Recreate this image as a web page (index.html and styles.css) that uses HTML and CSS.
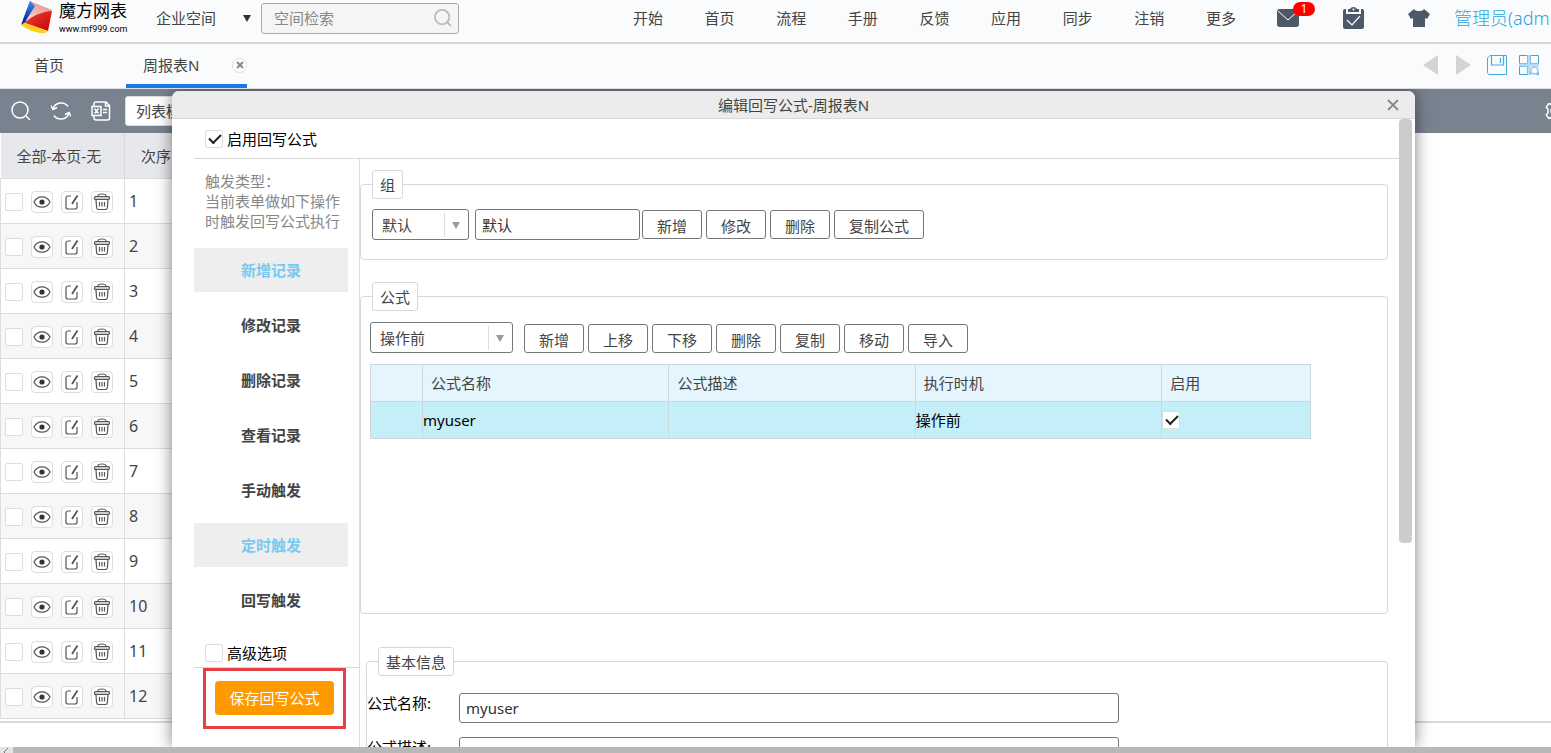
FILE: index.html
```html
<!DOCTYPE html>
<html lang="zh-CN">

<head>
    <meta charset="UTF-8">
    <meta name="viewport" content="width=device-width, initial-scale=1.0">
    <title>魔方网表</title>
    <link rel="stylesheet" href="styles.css">
</head>

<body>

    <svg class="sprite" aria-hidden="true">
        <symbol id="icon-search" viewBox="0 0 20 20">
            <circle cx="9" cy="9" r="8" />
            <path d="M15 15l4 4" />
        </symbol>
        <symbol id="icon-eye" viewBox="0 0 18 18">
            <path d="M1 9c1.600-3.300 4.600-5.200 8-5.200s6.400 1.900 8 5.200c-1.600 3.300-4.600 5.200-8 5.200s-6.400-1.900-8-5.200z" />
            <circle cx="9" cy="9" r="2.600" fill="#333" stroke="none" />
        </symbol>
        <symbol id="icon-edit" viewBox="0 0 18 18">
            <path d="M8 3H5a2 2 0 0 0-2 2v9a2 2 0 0 0 2 2h7a2 2 0 0 0 2-2V9" />
            <path d="M14.500 2.500L9 11" stroke-width="1.800" />
        </symbol>
        <symbol id="icon-trash" viewBox="0 0 18 18">
            <path d="M5 3q0-2 4-2t4 2" />
            <path d="M2.500 3.500h13q1 0 1 1.500t-1 1.500h-13q-1 0-1-1.500t1-1.500z" fill="#ccc" />
            <path d="M3 7l.6 7.500q.2 2 2 2h6.800q1.800 0 2-2L15 7" />
            <path d="M6.500 9v4.500M9 9v4.500M11.500 9v4.500" />
        </symbol>
    </svg>

    <header class="topbar">
        <a class="logo" href="#">
            <svg width="32" height="34" viewBox="0 0 32 34">
                <defs>
                    <linearGradient id="blue" x1="0" y1="0" x2="0" y2="1">
                        <stop offset="0" stop-color="#3f8fe8" />
                        <stop offset="1" stop-color="#0b1e96" />
                    </linearGradient>
                    <linearGradient id="pink" x1="1" y1="0" x2="0" y2="1">
                        <stop offset="0" stop-color="#e2867f" />
                        <stop offset="1" stop-color="#fbdcd8" />
                    </linearGradient>
                    <linearGradient id="red" x1="0" y1="0" x2="1" y2="1">
                        <stop offset="0" stop-color="#e8463a" />
                        <stop offset="1" stop-color="#c80000" />
                    </linearGradient>
                </defs>
                <path d="M9 1L0 25l5-3L13 7z" fill="url(#blue)" />
                <path d="M9 1l22 9-2 2C20 12 11 15 4 22z" fill="url(#pink)" />
                <path d="M9 1L2 20l2 2L14 6z" fill="url(#blue)" />
                <path d="M31 11l-4 20L4 23c6-7 15-11 27-12z" fill="url(#red)" />
                <path d="M0 25l4-2 23 8q-3 3-8 2Q8 31 0 25z" fill="#ffcf1c" />
            </svg>
            <span class="logo-text">
                <strong>魔方网表</strong>
                <small>www.mf999.com</small>
            </span>
        </a>
        <button class="space" type="button"><span>企业空间</span><i class="caret"></i></button>
        <div class="search">
            <input type="text" placeholder="空间检索" aria-label="空间检索">
            <svg class="search-icon" width="18" height="18">
                <use href="#icon-search" />
            </svg>
        </div>
        <nav class="menu">
            <a href="#">开始</a>
            <a href="#">首页</a>
            <a href="#">流程</a>
            <a href="#">手册</a>
            <a href="#">反馈</a>
            <a href="#">应用</a>
            <a href="#">同步</a>
            <a href="#">注销</a>
            <a href="#">更多</a>
        </nav>
        <div class="tools">
            <button class="plain mail" type="button" aria-label="消息">
                <svg width="22" height="18" viewBox="0 0 22 18">
                    <rect width="22" height="18" rx="3" fill="#4d5868" />
                    <path d="M1 2l10 9 10-9" fill="none" stroke="#fff" />
                </svg>
                <span class="badge">1</span>
            </button>
            <button class="plain" type="button" aria-label="任务">
                <svg width="21" height="22" viewBox="0 0 21 22">
                    <path d="M0 4q0-2 2-2h1v5h15V2h1q2 0 2 2v16q0 2-2 2H2q-2 0-2-2z" fill="#4d5868" />
                    <path d="M5 5V2h2q1-2 3.500-2T14 2h2v3z" fill="#4d5868" />
                    <circle cx="10.500" cy="2.500" r="1" fill="#fff" />
                    <path d="M4 13l5 5 8-9" fill="none" stroke="#fff" stroke-width="1.200" />
                </svg>
            </button>
            <button class="plain" type="button" aria-label="皮肤">
                <svg width="22" height="18" viewBox="0 0 22 18">
                    <path d="M6 0q1 2 5 2t5-2l6 5-3 5-2-1v9H5V9l-2 1-3-5z" fill="#4d5868" />
                </svg>
            </button>
        </div>
        <a class="user" href="#">管理员(adm</a>
    </header>

    <div class="tabs">
        <a class="tab" href="#">首页</a>
        <div class="tab active">
            <a href="#">周报表N</a>
            <button class="tab-close" type="button" aria-label="关闭标签">
                <svg width="8" height="8" viewBox="0 0 8 8">
                    <path d="M1 1l6 6M7 1L1 7" stroke="#888" stroke-width="2" />
                </svg>
            </button>
        </div>
        <div class="tab-tools">
            <button class="plain" type="button" aria-label="向左">
                <svg width="16" height="20" viewBox="0 0 16 20">
                    <path d="M15 0v20L0 10z" fill="#d4d4d4" />
                </svg>
            </button>
            <button class="plain" type="button" aria-label="向右">
                <svg width="16" height="20" viewBox="0 0 16 20">
                    <path d="M1 0v20l15-10z" fill="#d4d4d4" />
                </svg>
            </button>
            <button class="plain" type="button" aria-label="保存">
                <svg width="20" height="20" viewBox="0 0 20 20" fill="none" stroke="#3fb0e0">
                    <path d="M3 .5h16.500v19H2.500q-2 0-2-2V3z" />
                    <path d="M4.500 1v9h12V1M13.500 3v5" stroke-width="1.200" />
                </svg>
            </button>
            <button class="plain" type="button" aria-label="布局">
                <svg width="20" height="20" viewBox="0 0 20 20" fill="none" stroke="#3fa4dc">
                    <path d="M10 0v20M0 10h20" stroke="#b5dcf5" stroke-width="3" />
                    <path d="M8.500.5h-8v8M11.500.5h8v8M.5 11.500v8h8" />
                    <path d="M8.500.5v8h-8M11.500.5v8h8M.5 11.500h8v8" stroke="#7cc3ea" />
                    <circle cx="15.500" cy="15.500" r="3.500" stroke="#8cc8ee" stroke-width="1.500" fill="#fff" />
                    <path d="M11.500 19.500v-2M19.500 17.500v2h-2" />
                </svg>
            </button>
        </div>
    </div>

    <main class="main">
        <div class="toolbar">
            <button class="plain" type="button" aria-label="查询">
                <svg width="20" height="20">
                    <use href="#icon-search" />
                </svg>
            </button>
            <button class="plain" type="button" aria-label="刷新">
                <svg width="20" height="20" viewBox="0 0 20 20">
                    <path d="M2 8a8.500 8.500 0 0 1 15-2.500M18 12a8.500 8.500 0 0 1-15 2.500" />
                    <path d="M0 4.500L2 8.500l4-2M20 15.500l-2-4-4 2" />
                </svg>
            </button>
            <button class="plain" type="button" aria-label="导出">
                <svg width="20" height="20" viewBox="0 0 20 20">
                    <path d="M3 5V3q0-2 2-2h10l3.500 3.500V17q0 2-2 2H5q-2 0-2-2v-2M14.500 1v4h4" />
                    <path d="M1 5.500h9v9H1zM3.500 7.500l4 5M7.500 7.500l-4 5M12 8.500h4M12 11.500h4" />
                </svg>
            </button>
            <button class="template" type="button">列表模板</button>
            <button class="plain gear" type="button" aria-label="设置">
                <svg width="20" height="20" viewBox="0 0 20 20">
                    <path d="M8 1h4l.7 2.500 2.600-.8 2.400 3.500-1.700 2v3.600l1.700 2-2.400 3.500-2.600-.8L12 19H8l-.7-2.500-2.600.8-2.400-3.500 1.700-2V8.200l-1.700-2 2.400-3.500 2.600.8z" />
                    <circle cx="10" cy="10" r="3" />
                </svg>
            </button>
        </div>

        <div class="list">
            <table class="records">
                <thead>
                    <tr>
                        <th class="col-actions">全部-本页-无</th>
                        <th>次序</th>
                    </tr>
                </thead>
                <tbody id="records"></tbody>
            </table>
        </div>

        <section class="dialog" role="dialog" aria-labelledby="dialog-title">
            <div class="dialog-head">
                <h1 id="dialog-title">编辑回写公式-周报表N</h1>
                <button class="plain dialog-close" type="button" aria-label="关闭">
                    <svg width="12" height="12" viewBox="0 0 12 12">
                        <path d="M1 1l10 10M11 1L1 11" stroke="#888" stroke-width="1.800" />
                    </svg>
                </button>
            </div>

            <div class="dialog-body">
                <div class="enable">
                    <label class="check"><input type="checkbox" checked>启用回写公式</label>
                </div>

                <div class="columns">
                    <aside class="side">
                        <p class="hint">触发类型：<br>当前表单做如下操作<br>时触发回写公式执行</p>
                        <div class="triggers">
                            <button class="trigger on" type="button">新增记录</button>
                            <button class="trigger" type="button">修改记录</button>
                            <button class="trigger" type="button">删除记录</button>
                            <button class="trigger" type="button">查看记录</button>
                            <button class="trigger" type="button">手动触发</button>
                            <button class="trigger on" type="button">定时触发</button>
                            <button class="trigger" type="button">回写触发</button>
                        </div>
                        <div class="advanced">
                            <label class="check"><input type="checkbox">高级选项</label>
                        </div>
                        <div class="save-box">
                            <button class="save" type="button">保存回写公式</button>
                        </div>
                    </aside>

                    <div class="content">
                        <fieldset class="panel">
                            <legend>组</legend>
                            <div class="row group-row">
                                <select class="group-select" aria-label="组">
                                    <option>默认</option>
                                </select>
                                <input class="field group-name" type="text" value="默认" aria-label="组名称">
                                <div class="buttons">
                                    <button class="btn" type="button">新增</button>
                                    <button class="btn" type="button">修改</button>
                                    <button class="btn" type="button">删除</button>
                                    <button class="btn" type="button">复制公式</button>
                                </div>
                            </div>
                        </fieldset>

                        <fieldset class="panel formulas">
                            <legend>公式</legend>
                            <div class="row formula-row">
                                <select class="time-select" aria-label="执行时机">
                                    <option>操作前</option>
                                </select>
                                <div class="buttons">
                                    <button class="btn" type="button">新增</button>
                                    <button class="btn" type="button">上移</button>
                                    <button class="btn" type="button">下移</button>
                                    <button class="btn" type="button">删除</button>
                                    <button class="btn" type="button">复制</button>
                                    <button class="btn" type="button">移动</button>
                                    <button class="btn" type="button">导入</button>
                                </div>
                            </div>
                            <table class="grid">
                                <colgroup>
                                    <col class="c-mark">
                                    <col class="c-wide">
                                    <col class="c-wide">
                                    <col class="c-wide">
                                    <col>
                                </colgroup>
                                <thead>
                                    <tr>
                                        <th></th>
                                        <th>公式名称</th>
                                        <th>公式描述</th>
                                        <th>执行时机</th>
                                        <th>启用</th>
                                    </tr>
                                </thead>
                                <tbody>
                                    <tr>
                                        <td></td>
                                        <td>myuser</td>
                                        <td></td>
                                        <td>操作前</td>
                                        <td><input type="checkbox" checked aria-label="启用"></td>
                                    </tr>
                                </tbody>
                            </table>
                        </fieldset>

                        <fieldset class="panel basic">
                            <legend>基本信息</legend>
                            <div class="form-group">
                                <label for="fname">公式名称:</label>
                                <input class="field" type="text" id="fname" value="myuser">
                            </div>
                            <div class="form-group">
                                <label for="fdesc">公式描述:</label>
                                <input class="field" type="text" id="fdesc">
                            </div>
                        </fieldset>
                    </div>
                </div>
                <div class="scroll-thumb"></div>
            </div>
        </section>
    </main>

    <div class="hscroll">
        <svg width="8" height="6" viewBox="0 0 8 6">
            <path d="M6 1L2 5l1 1" fill="none" stroke="#777" />
        </svg>
    </div>

    <script>
        const records = document.querySelector("#records");

        const icon = (name, label) => `
            <button class="act" type="button" aria-label="${label}">
                <svg width="18" height="18"><use href="#icon-${name}" /></svg>
            </button>`;

        let rows = '';
        for (let i = 1; i <= 12; i++) {
            rows += `
            <tr>
                <td>
                    <div class="actions">
                        <input type="checkbox" aria-label="选择 ${i}">
                        ${icon("eye", "查看")}${icon("edit", "编辑")}${icon("trash", "删除")}
                    </div>
                </td>
                <td>${i}</td>
            </tr>`;
        }
        records.innerHTML = rows;
    </script>
</body>

</html>
```

FILE: styles.css
```css
* {
    box-sizing: border-box;
    margin: 0;
    padding: 0;
}

body {
    display: flex;
    flex-direction: column;
    height: 100vh;
    overflow: hidden;
    font-family: "Noto Sans", "Noto Sans CJK SC", sans-serif;
    font-size: 15px;
    font-weight: 400;
    line-height: 20px;
    color: #444;
    background-color: #fff;
}

button,
input,
select {
    font: inherit;
    color: inherit;
}

button {
    cursor: pointer;
}

a {
    color: inherit;
    text-decoration: none;
}

.sprite {
    display: none;
}

.plain {
    display: flex;
    background: none;
    border: none;
}

input[type="checkbox"] {
    appearance: none;
    flex: none;
    position: relative;
    width: 18px;
    height: 18px;
    background-color: #fff;
    border: 1px solid #ddd;
    border-radius: 2px;
}

input[type="checkbox"]:checked::after {
    content: "";
    position: absolute;
    left: 3px;
    top: 3px;
    width: 10px;
    height: 5px;
    border-left: 2px solid #222;
    border-bottom: 2px solid #222;
    transform: rotate(-45deg);
}

/* top bar */
.topbar {
    flex: none;
    display: flex;
    align-items: center;
    height: 44px;
    padding: 0 0 6px 21px;
    background-color: #fafbfd;
    border-bottom: 2px solid #d6d7d9;
    overflow: hidden;
}

.logo {
    flex: none;
    display: flex;
    gap: 6px;
    width: 135px;
}

.logo-text {
    display: flex;
    flex-direction: column;
    color: #000;
}

.logo-text strong {
    font-size: 17px;
    font-weight: 400;
    line-height: 22px;
}

.logo-text small {
    font-family: Roboto, sans-serif;
    font-size: 9px;
    line-height: 14px;
}

.space {
    flex: none;
    display: flex;
    justify-content: space-between;
    align-items: center;
    width: 95px;
    background: none;
    border: none;
}

.caret {
    border: 4px solid transparent;
    border-top: 7px solid #333;
    border-bottom: none;
}

.search {
    flex: none;
    display: flex;
    align-items: center;
    width: 198px;
    height: 31px;
    margin-left: 10px;
    padding: 0 6px 0 12px;
    background-color: #f5f5f5;
    border: 1px solid #aaa;
    border-radius: 3px;
}

.search input {
    flex: 1;
    min-width: 0;
    background: none;
    border: none;
    outline: none;
}

.search input::placeholder {
    color: #888;
}

.search-icon {
    fill: none;
    stroke: #bbb;
    stroke-width: 2;
}

.menu {
    flex: 1;
    display: flex;
    justify-content: space-between;
    margin: 0 41px 0 174px;
}

.tools {
    flex: none;
    display: flex;
    align-items: center;
    gap: 44px;
}

.mail {
    position: relative;
}

.badge {
    position: absolute;
    left: 16px;
    top: -7px;
    width: 22px;
    height: 14px;
    font-size: 12px;
    line-height: 14px;
    color: #fff;
    background-color: #f00;
    border-radius: 7px;
}

.user {
    flex: none;
    width: 97px;
    margin-left: 24px;
    font-size: 18px;
    font-weight: 300;
    white-space: nowrap;
    color: #1fa8e2;
}

/* tabs */
.tabs {
    flex: none;
    display: flex;
    height: 45px;
    background-color: #fafbfd;
    border-bottom: 1px solid #ddd;
}

.tab {
    display: flex;
    align-items: center;
    width: 126px;
    padding: 0 0 2px 34px;
}

.tab.active {
    justify-content: space-between;
    width: 121px;
    padding: 2px 0 0 17px;
    border-bottom: 4px solid #1a78e6;
}

.tab-close {
    display: flex;
    justify-content: center;
    align-items: center;
    width: 15px;
    height: 15px;
    background-color: #fff;
    border: 1px solid #ddd;
    border-radius: 50%;
}

.tab-tools {
    flex: 1;
    display: flex;
    justify-content: flex-end;
    align-items: center;
    gap: 12px;
    padding: 0 12px 2px 0;
}

.tab-tools .plain:nth-child(-n+2) {
    margin-right: 4px;
}

/* record list */
.main {
    flex: 1;
    min-height: 0;
    position: relative;
    overflow: hidden;
}

.toolbar {
    display: flex;
    align-items: center;
    gap: 20px;
    height: 44px;
    padding-left: 11px;
    background-color: #79828f;
    overflow: hidden;
}

.toolbar svg {
    fill: none;
    stroke: #fff;
    stroke-width: 1.5;
}

.template {
    flex: none;
    height: 30px;
    margin-left: -6px;
    padding: 0 10px;
    background-color: #fff;
    border: 1px solid #ddd;
    border-radius: 3px;
}

.gear {
    margin-left: auto;
    margin-right: -13px;
}

.list {
    padding-bottom: 2px;
    border-bottom: 2px solid #d8d8d8;
}

.records {
    width: 80%;
    border-collapse: collapse;
    table-layout: fixed;
}

.records th {
    height: 45px;
    padding: 2px 0 0 16px;
    font-weight: 400;
    text-align: left;
    background-color: #e6e8ec;
    border-right: 1px solid #d8dade;
}

.records .col-actions {
    width: 124px;
}

.records td {
    height: 45px;
    padding-left: 4px;
    font-size: 16px;
    border: 1px solid #ddd;
}

.records tbody tr:nth-child(even) {
    background-color: #f7f7f7;
}

.actions {
    display: flex;
    align-items: center;
    gap: 8px;
    padding-top: 3px;
}

.act {
    display: flex;
    justify-content: center;
    align-items: center;
    width: 22px;
    height: 22px;
    background-color: #fff;
    border: 1px solid #ddd;
    border-radius: 4px;
}

.act svg {
    flex: none;
    fill: none;
    stroke: #555;
    stroke-width: 1.2;
}

/* dialog */
.dialog {
    position: absolute;
    left: 172px;
    right: 136px;
    top: 2px;
    bottom: 0;
    display: flex;
    flex-direction: column;
    background-color: #fff;
    border-radius: 7px 7px 0 0;
    box-shadow: 0 0 16px rgba(0, 0, 0, 0.5);
    overflow: hidden;
}

.dialog-head {
    flex: none;
    display: flex;
    align-items: center;
    height: 28px;
    padding: 0 16px;
    background-color: #ececec;
    border-bottom: 1px solid #d8d8d8;
}

.dialog-head h1 {
    flex: 1;
    font-size: 15px;
    font-weight: 400;
    text-align: center;
}

.dialog-close {
    margin-left: -12px;
}

.dialog-body {
    flex: 1;
    min-height: 0;
    position: relative;
    display: flex;
    flex-direction: column;
    padding: 0 16px 0 22px;
}

.scroll-thumb {
    position: absolute;
    right: 3px;
    top: 0;
    width: 13px;
    height: 67.5%;
    background-color: #ccc;
    border-radius: 4px;
}

.enable {
    flex: none;
    height: 40px;
    padding: 10px 11px 0;
    border-bottom: 1px solid #d8d8d8;
}

.check {
    display: flex;
    align-items: center;
    gap: 4px;
    color: #000;
}

.columns {
    flex: 1;
    min-height: 0;
    display: flex;
}

.side {
    flex: none;
    width: 166px;
    border-right: 1px solid #ddd;
}

.hint {
    padding: 12px 0 17px 11px;
    color: #888;
}

.triggers {
    display: flex;
    flex-direction: column;
    gap: 11px;
    padding-right: 11px;
}

.trigger {
    height: 44px;
    font-weight: 700;
    background-color: #fff;
    border: none;
}

.trigger.on {
    color: #76caf2;
    background-color: #eee;
}

.advanced {
    padding: 21px 11px 4px;
    border-bottom: 1px solid #d8d8d8;
}

.save-box {
    width: 143px;
    margin-left: 9px;
    padding: 10px 9px 11px;
    border: 3px solid #e64046;
}

.save {
    display: block;
    width: 100%;
    height: 34px;
    color: #fff;
    background-color: #ff9900;
    border: none;
    border-radius: 4px;
}

.content {
    flex: 1;
    min-width: 0;
    padding: 11px 11px 0 0;
}

.panel {
    min-width: 0;
    height: 90px;
    margin-bottom: 22px;
    padding: 10px 9px;
    border: 1px solid #d8d8d8;
    border-radius: 4px;
}

.panel legend {
    margin-left: 2px;
    padding: 4px 7px 3px;
    line-height: 20px;
    border: 1px solid #d8d8d8;
    border-radius: 3px;
}

.row {
    display: flex;
    align-items: flex-end;
}

.group-row {
    align-items: center;
    padding-left: 2px;
}

.formula-row {
    gap: 11px;
    margin-bottom: 11px;
}

.buttons {
    display: flex;
    gap: 4px;
}

select,
.field {
    height: 31px;
    background-color: #fff;
    border: 1px solid #777;
    border-radius: 3px;
}

select {
    appearance: none;
    padding-left: 9px;
    background-image: url("data:image/svg+xml,%3Csvg xmlns='http://www.w3.org/2000/svg' width='24' height='24'%3E%3Cpath d='M.5 0v24' stroke='%23ddd'/%3E%3Cpath d='M8 9h8l-4 7z' fill='%23999'/%3E%3C/svg%3E");
    background-position: right center;
    background-repeat: no-repeat;
}

.field {
    padding-left: 6px;
    color: #333;
}

.group-select {
    width: 97px;
}

.group-name {
    width: 165px;
    margin: 0 2px 0 6px;
}

.time-select {
    width: 143px;
}

.btn {
    height: 29px;
    padding: 2px 14px 0;
    background-color: #fff;
    border: 1px solid #777;
    border-radius: 3px;
}

.formulas {
    height: 332px;
    margin-bottom: 33px;
    padding-top: 11px;
}

.grid {
    width: 93.4%;
    border-collapse: collapse;
    table-layout: fixed;
}

.c-mark {
    width: 52px;
}

.c-wide {
    width: 26.2%;
}

.grid th {
    height: 37px;
    padding-left: 8px;
    font-weight: 400;
    text-align: left;
    background-color: #e4f5fd;
    border: 1px solid #cdd6da;
}

.grid td {
    height: 37px;
    color: #000;
    background-color: #c4eef8;
    border: 1px solid #cdd6da;
}

.grid input {
    display: block;
}

.basic {
    height: 200px;
    margin-left: 6px;
    padding: 17px 0;
}

.panel.basic legend {
    margin-left: 11px;
}

.form-group {
    display: flex;
    margin-bottom: 14px;
}

.form-group label {
    width: 92px;
    color: #000;
}

.form-group .field {
    width: 64.7%;
    height: 30px;
}

/* window scrollbar */
.hscroll {
    flex: none;
    display: flex;
    height: 6px;
    padding-left: 2px;
    background: linear-gradient(to right, #e4e4e4 13px, #b8b8b8 13px);
}
```
